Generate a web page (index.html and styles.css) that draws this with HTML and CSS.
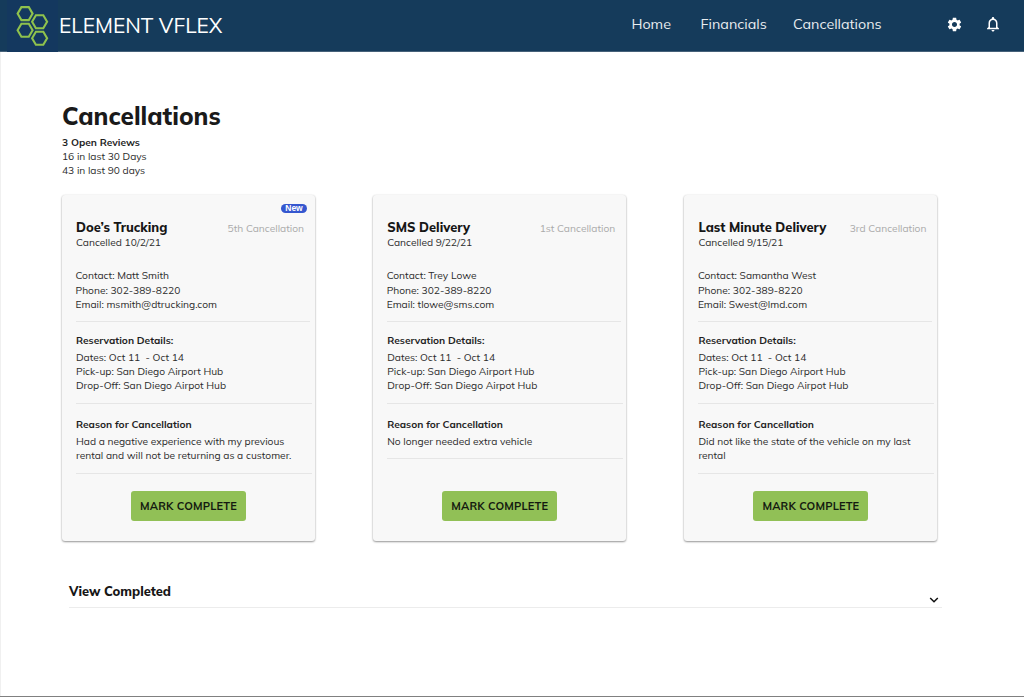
FILE: index.html
```html
<!DOCTYPE html>
<html lang="en">
<head>
  <meta charset="UTF-8">
  <meta name="viewport" content="width=device-width, initial-scale=1.0">
  <title>Element VFlex - Cancellations</title>
  <link rel="stylesheet" href="styles.css">
</head>
<body>

<header class="navbar">
  <div class="logo">
    <svg width="51" height="52" viewBox="0 0 51 52" fill="none" stroke="#8fc24d" stroke-width="2.1">
      <path d="M10.6 13.6l3.8-6.5h7.4l3.8 6.5-3.8 6.5h-7.4z"/>
      <path d="M25.1 21.7l3.8-6.5h7.4l3.8 6.5-3.8 6.5h-7.4z"/>
      <path d="M10.6 30.2l3.8-6.5h7.4l3.8 6.5-3.8 6.5h-7.4z"/>
      <path d="M25.1 38.3l3.8-6.5h7.4l3.8 6.5-3.8 6.5h-7.4z"/>
    </svg>
  </div>
  <div class="brand">ELEMENT VFLEX</div>
  <nav class="links">
    <a class="home">Home</a>
    <a class="financials">Financials</a>
    <a class="cancels">Cancellations</a>
  </nav>
  <svg class="gear" width="17" height="17" viewBox="0 0 24 24" fill="#fff">
    <path d="M19.14 12.94c.04-.3.06-.61.06-.94 0-.32-.02-.64-.07-.94l2.03-1.58c.18-.14.23-.41.12-.61l-1.92-3.32c-.12-.22-.37-.29-.59-.22l-2.39.96c-.5-.38-1.03-.7-1.62-.94l-.36-2.54c-.04-.24-.24-.41-.48-.41h-3.84c-.24 0-.43.17-.47.41l-.36 2.54c-.59.24-1.13.57-1.62.94l-2.39-.96c-.22-.08-.47 0-.59.22L2.74 8.87c-.12.21-.08.47.12.61l2.03 1.58c-.05.3-.09.63-.09.94s.02.64.07.94l-2.03 1.58c-.18.14-.23.41-.12.61l1.92 3.32c.12.22.37.29.59.22l2.39-.96c.5.38 1.03.7 1.62.94l.36 2.54c.05.24.24.41.48.41h3.84c.24 0 .44-.17.47-.41l.36-2.54c.59-.24 1.13-.56 1.62-.94l2.39.96c.22.08.47 0 .59-.22l1.92-3.32c.12-.22.07-.47-.12-.61l-2.01-1.58zM12 15.6c-1.98 0-3.6-1.62-3.6-3.6s1.62-3.6 3.6-3.6 3.6 1.62 3.6 3.6-1.62 3.6-3.6 3.6z"/>
  </svg>
  <svg class="bell" width="18" height="18" viewBox="0 0 24 24" fill="#fff">
    <path d="M12 22c1.1 0 2-.9 2-2h-4c0 1.1.9 2 2 2zm6-6v-5c0-3.07-1.63-5.64-4.5-6.32V4c0-.83-.67-1.5-1.5-1.5s-1.5.67-1.5 1.5v.68C7.64 5.36 6 7.92 6 11v5l-2 2v1h16v-1l-2-2zm-2 1H8v-6c0-2.48 1.51-4.5 4-4.5s4 2.02 4 4.5v6z"/>
  </svg>
</header>

<main>
  <h1>Cancellations</h1>
  <div class="summary">
    <b>3 Open Reviews</b>
    <p>16 in last 30 Days</p>
    <p>43 in last 90 days</p>
  </div>

  <div class="cards">
    <div class="card">
      <div class="top"><span class="badge">New</span></div>
      <div class="heading">
        <h2>Doe’s Trucking</h2>
        <span class="count">5th Cancellation</span>
      </div>
      <p>Cancelled 10/2/21</p>
      <div class="contact">
        <p>Contact: Matt Smith</p>
        <p>Phone: 302-389-8220</p>
        <p>Email: msmith@dtrucking.com</p>
      </div>
      <div class="details">
        <h3>Reservation Details:</h3>
        <p>Dates: Oct 11 &nbsp;- Oct 14</p>
        <p>Pick-up: San Diego Airport Hub</p>
        <p>Drop-Off: San Diego Airpot Hub</p>
      </div>
      <div class="reason">
        <h3>Reason for Cancellation</h3>
        <p>Had a negative experience with my previous<br>rental and will not be returning as a customer.</p>
      </div>
      <button>MARK COMPLETE</button>
    </div>

    <div class="card">
      <div class="top"></div>
      <div class="heading">
        <h2>SMS Delivery</h2>
        <span class="count">1st Cancellation</span>
      </div>
      <p>Cancelled 9/22/21</p>
      <div class="contact">
        <p>Contact: Trey Lowe</p>
        <p>Phone: 302-389-8220</p>
        <p>Email: tlowe@sms.com</p>
      </div>
      <div class="details">
        <h3>Reservation Details:</h3>
        <p>Dates: Oct 11 &nbsp;- Oct 14</p>
        <p>Pick-up: San Diego Airport Hub</p>
        <p>Drop-Off: San Diego Airpot Hub</p>
      </div>
      <div class="reason">
        <h3>Reason for Cancellation</h3>
        <p>No longer needed extra vehicle</p>
      </div>
      <button>MARK COMPLETE</button>
    </div>

    <div class="card">
      <div class="top"></div>
      <div class="heading">
        <h2>Last Minute Delivery</h2>
        <span class="count">3rd Cancellation</span>
      </div>
      <p>Cancelled 9/15/21</p>
      <div class="contact">
        <p>Contact: Samantha West</p>
        <p>Phone: 302-389-8220</p>
        <p>Email: Swest@lmd.com</p>
      </div>
      <div class="details">
        <h3>Reservation Details:</h3>
        <p>Dates: Oct 11 &nbsp;- Oct 14</p>
        <p>Pick-up: San Diego Airport Hub</p>
        <p>Drop-Off: San Diego Airpot Hub</p>
      </div>
      <div class="reason">
        <h3>Reason for Cancellation</h3>
        <p>Did not like the state of the vehicle on my last<br>rental</p>
      </div>
      <button>MARK COMPLETE</button>
    </div>
  </div>

  <div class="completed">
    <h2>View Completed</h2>
    <svg width="10" height="6" viewBox="0 0 10 6" fill="none" stroke="#111" stroke-width="1.5">
      <path d="M1.2 1l3.8 3.8L8.8 1"/>
    </svg>
  </div>
</main>

</body>
</html>
```
FILE: styles.css
```css
* {
  box-sizing: border-box;
}

body {
  margin: 0;
  height: 697px;
  font-family: Mulish, Muli, Lato, sans-serif;
  font-size: 10.2px;
  line-height: 14.3px;
  color: #2b2b2b;
  background: #fff;
  border-bottom: 1px solid #808080;
}

h1, h2, h3, p {
  margin: 0;
}

.navbar {
  display: flex;
  height: 52px;
  padding-left: 7px;
  background: #153b5b;
  border-bottom: 1px solid #456179;
  color: #fff;
}

.logo {
  width: 51px;
  height: 52px;
  background: #14385f;
}

.brand {
  width: 165px;
  margin-left: 1px;
  font-size: 20.9px;
  line-height: 51px;
  white-space: nowrap;
}

.links {
  display: flex;
  margin-left: 407.5px;
  width: 314px;
  font-size: 14.3px;
  line-height: 48px;
  color: #e9edf0;
}

.home {
  width: 69px;
}

.financials {
  width: 92.5px;
}

.gear {
  margin-top: 15.5px;
}

.bell {
  margin: 15px 0 0 21px;
}

main {
  height: 644px;
  padding: 48px 0 0 61px;
  border-left: 1px solid #f0f0f0;
}

h1 {
  font-size: 24.3px;
  line-height: 32px;
  font-weight: 800;
  color: #1a1a1a;
}

.summary {
  margin-top: 3.5px;
}

b, h3 {
  display: block;
  font-size: 10.2px;
  font-weight: 700;
  color: #1f1f1f;
}

.cards {
  display: grid;
  grid-template-columns: repeat(3, 253px);
  gap: 58.2px;
  margin-top: 16.6px;
}

.card {
  display: flex;
  flex-direction: column;
  height: 346px;
  padding: 9px 3px 20px 14px;
  background: #f8f8f8;
  border-radius: 3px;
  box-shadow: 0 1px 2px rgba(0, 0, 0, 0.4), 0 0 2px rgba(0, 0, 0, 0.08);
}

.top {
  height: 15px;
  padding-right: 5px;
  display: flex;
  justify-content: flex-end;
}

.badge {
  width: 26px;
  height: 9px;
  border-radius: 5px;
  background: #3557cf;
  color: #fff;
  font: bold 8.5px/9px "Liberation Sans", sans-serif;
  text-align: center;
}

.heading {
  display: flex;
  justify-content: space-between;
  height: 17px;
  padding-right: 8px;
}

h2 {
  font-size: 12.9px;
  font-weight: 800;
  line-height: 16px;
  color: #161616;
}

.count {
  padding-top: 3px;
  line-height: 14px;
  color: #aaa;
}

.contact {
  height: 53px;
  margin: 19.2px 2px 0 -0.5px;
  border-bottom: 1px solid #e6e6e6;
}

.details {
  height: 81.5px;
  padding-top: 12px;
  border-bottom: 1px solid #e6e6e6;
}

.reason {
  padding: 14.5px 0 9.2px;
  border-bottom: 1px solid #e6e6e6;
}

h3 {
  margin-bottom: 2px;
}

button {
  width: 115px;
  height: 30px;
  margin: auto auto 0 55px;
  padding: 0;
  border: none;
  border-radius: 3px;
  background: #91c056;
  color: #141a10;
  font-family: inherit;
  font-size: 11px;
  font-weight: 700;
  letter-spacing: 0.17px;
}

.completed {
  display: flex;
  justify-content: space-between;
  width: 873px;
  height: 25px;
  margin: 42px 0 0 7px;
  padding-right: 3px;
  border-bottom: 1px solid #ececec;
}

.completed svg {
  margin-top: 14px;
}
```
